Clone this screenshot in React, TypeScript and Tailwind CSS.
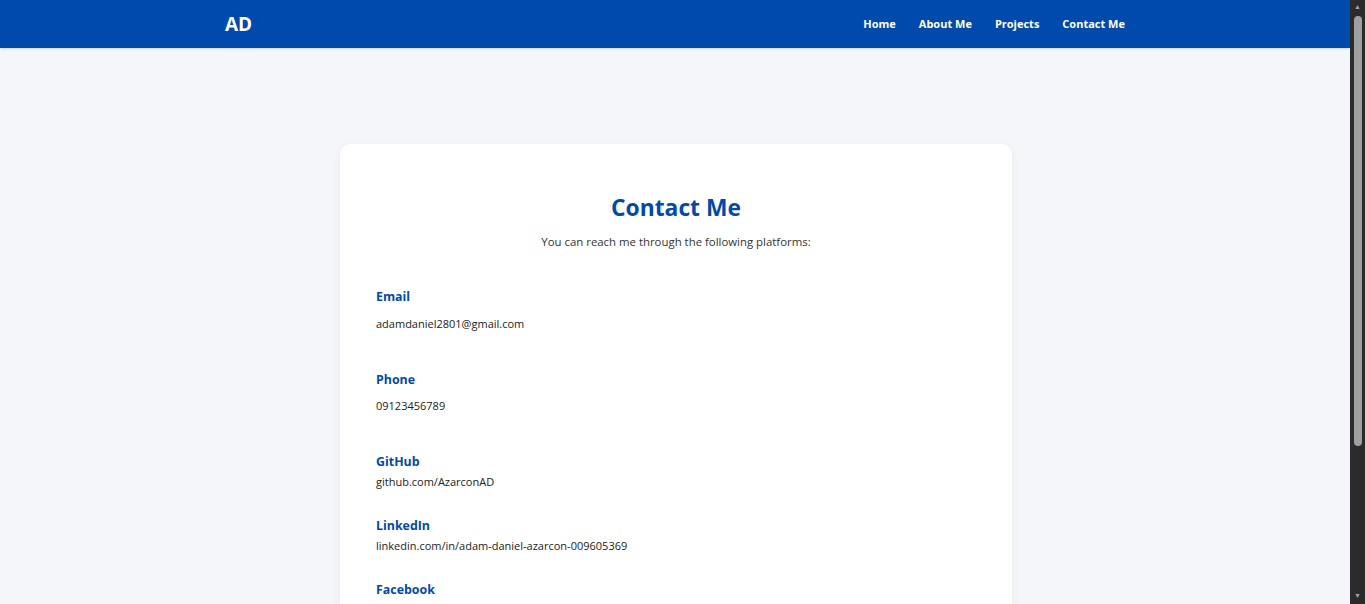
const font = { fontFamily: '"Open Sans", "Noto Sans", sans-serif' };

const links = ['Home', 'About Me', 'Projects', 'Contact Me'];

function ContactItem({ label, value, className, valueClass }: { label: string; value: string; className: string; valueClass: string }) {
  return (
    <div className={className}>
      <h3 className="text-[12.4px] leading-[18px] font-bold text-[#004aad]">{label}</h3>
      <p className={`text-[11px] leading-4 text-[#222] ${valueClass}`}>{value}</p>
    </div>
  );
}

function Scrollbar() {
  return (
    <div className="fixed top-0 right-0 w-[15px] h-[604px] bg-[#2b2b2b] flex flex-col items-center">
      <div className="h-[15px] flex items-center justify-center text-[#a3a3a3] text-[7px]">▲</div>
      <div className="w-[8px] h-[430px] rounded-full bg-[#9f9f9f] mt-[1px]" />
      <div className="flex-1" />
      <div className="h-[15px] flex items-center justify-center text-[#a3a3a3] text-[7px]">▼</div>
    </div>
  );
}

export default function App() {
  return (
    <div className="w-[1350px] min-h-[900px] bg-[#f4f6fa]" style={font}>
      <header className="bg-[#004aad] h-12 shadow-sm">
        <div className="max-w-[900px] mx-auto h-full flex items-center justify-between">
          <span className="text-white text-[19px] font-bold">AD</span>
          <nav className="flex gap-[23px]">
            {links.map((l) => (
              <a key={l} className="text-white text-[11px] font-bold">{l}</a>
            ))}
          </nav>
        </div>
      </header>

      <main className="pt-24 pb-16 pl-[2px]">
        <section className="w-[672px] mx-auto bg-white rounded-[10px] shadow-[0_2px_10px_rgba(0,0,0,0.05)] px-9 pt-12 pb-12">
          <h1 className="text-center text-[22.8px] leading-8 font-bold text-[#004aad]">Contact Me</h1>
          <p className="text-center text-[11.4px] leading-[18px] text-[#333] mt-[9px]">
            You can reach me through the following platforms:
          </p>

          <ContactItem label="Email" value="adamdaniel2801@gmail.com" className="mt-[37px]" valueClass="mt-[10px]" />
          <ContactItem label="Phone" value="09123456789" className="mt-[39px]" valueClass="mt-[9px]" />
          <ContactItem label="GitHub" value="github.com/AzarconAD" className="mt-[39px]" valueClass="mt-[3px]" />
          <ContactItem label="LinkedIn" value="linkedin.com/in/adam-daniel-azarcon-009605369" className="mt-[27px]" valueClass="mt-[3px]" />
          <ContactItem label="Facebook" value="facebook.com/adamdaniel.azarcon" className="mt-[27px]" valueClass="mt-[3px]" />
        </section>
      </main>
      <Scrollbar />
    </div>
  );
}
